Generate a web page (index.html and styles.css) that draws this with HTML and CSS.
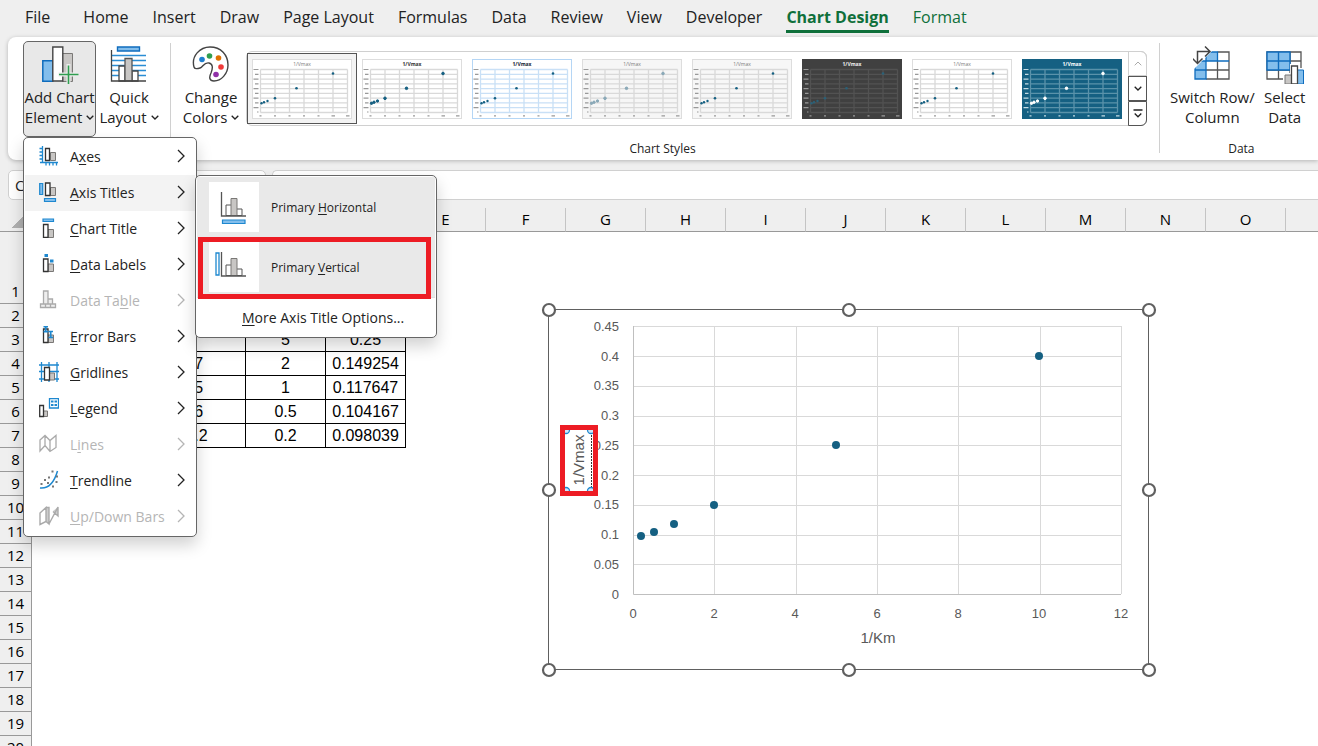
FILE: index.html
```html
<!DOCTYPE html>
<html lang="en">
<head>
<meta charset="utf-8">
<title>Workbook</title>
<link rel="stylesheet" href="styles.css">
</head>
<body>
<svg class="defs" aria-hidden="true">
  <symbol id="thumb" viewBox="0 0 100 60">
    <rect class="t-bg" x=".5" y=".5" width="99" height="59"/>
    <path class="t-grid" d="M8.5 10.5V53.5M23 10.5V53.5M37.5 10.5V53.5M52 10.5V53.5M66.5 10.5V53.5M81 10.5V53.5M95.5 10.5V53.5M8.500 10.500H95.500M8.500 15.300H95.500M8.500 20.100H95.500M8.500 24.800H95.500M8.500 29.600H95.500M8.500 34.400H95.500M8.500 39.200H95.500M8.500 43.900H95.500M8.500 48.700H95.500M8.500 53.500H95.500"/>
    <path class="t-lab" d="M1.500 10.500h5M3 15.300h3.500M1.500 20.100h5M3 24.800h3.500M1.500 29.600h5M3 34.400h3.500M1.500 39.200h5M3 43.900h3.500M1.500 48.700h5M5 53h1.500M7.500 56.800h2M22 56.800h2M36.500 56.800h2M51 56.800h2M65.500 56.800h2M79.500 56.800h3.500M94 56.800h3.500"/>
    <g class="t-dot"><circle cx="9.500" cy="44.300" r="1.200"/><circle cx="12" cy="43.200" r="1.200"/><circle cx="15.500" cy="42" r="1.200"/><circle cx="23" cy="39.300" r="1.300"/><circle cx="44.500" cy="29.300" r="1.300"/><circle cx="81" cy="14.500" r="1.300"/></g>
    <text class="t-title" x="50" y="6.500" text-anchor="middle">1/Vmax</text>
  </symbol>
  <symbol id="next" viewBox="0 0 8 14"><path d="M1 1l6 6-6 6" fill="none" stroke="currentColor" stroke-width="1.300"/></symbol>
  <symbol id="down" viewBox="0 0 8 5"><path d="M.7.7L4 4 7.300.7" fill="none" stroke="currentColor" stroke-width="1.300"/></symbol>
</svg>

<nav class="tabs">
  <a class="tab file" href="#file">File</a>
  <a class="tab" href="#home">Home</a>
  <a class="tab" href="#insert">Insert</a>
  <a class="tab" href="#draw">Draw</a>
  <a class="tab" href="#layout">Page Layout</a>
  <a class="tab" href="#formulas">Formulas</a>
  <a class="tab" href="#data">Data</a>
  <a class="tab" href="#review">Review</a>
  <a class="tab" href="#view">View</a>
  <a class="tab" href="#developer">Developer</a>
  <a class="tab active" href="#design">Chart Design</a>
  <a class="tab context" href="#format">Format</a>
</nav>

<section class="ribbon">
  <div class="group layouts">
    <div class="group-body">
      <div class="dropdown">
        <button class="big open">
          <svg width="38" height="38" viewBox="0 0 38 38">
            <path d="M21.500 7.500h10v28h-10z" fill="#c8c6c4" stroke="#7a7876"/>
            <path d="M1.800 14.700h10v20.500h-10z" fill="#83beec" stroke="#0f6cbd" stroke-width="1.500"/>
            <path d="M11.800 1h10v34h-10z" fill="#fff" stroke="#444" stroke-width="1.400"/>
            <path d="M27.500 18v20M17.500 28.500h20" stroke="#ececec" stroke-width="4"/>
            <path d="M27.500 19.500V38M18 28.500h19.500" stroke="#2f9e4f" stroke-width="1.600"/>
          </svg>
          <span>Add Chart<br>Element <svg class="caret" width="8" height="5"><use href="#down"/></svg></span>
        </button>

        <div class="menu">
          <button class="item"><svg width="20" height="20" viewBox="0 0 20 20"><path d="M3.500 0v17M.5 2.500h3M.5 6h3M.5 9.500h3M.5 13h3M2 16.500h17M7 16.500v3M10.500 16.500v3M14 16.500v3M17.500 16.500v3M1 16.500h2" stroke="#1e88cf" fill="none" stroke-width="1.300"/><path d="M11.500 6.500h5v8h-5z" fill="#c8c6c4" stroke="#7a7876"/><path d="M6.500 2.500h4v12h-4z" fill="#fff" stroke="#333" stroke-width="1.300"/></svg><span>A<u>x</u>es</span><svg class="go"><use href="#next"/></svg></button>
          <button class="item hot"><svg width="20" height="20" viewBox="0 0 20 20"><path d="M.7 1.500h3v11h-3zM5.500 16.500h11v3h-11z" fill="#83beec" stroke="#1e88cf" stroke-width="1.200"/><path d="M11.500 5.500h5v8h-5z" fill="#c8c6c4" stroke="#7a7876"/><path d="M6.500 1h4.500v12.500H6.500z" fill="#fff" stroke="#333" stroke-width="1.300"/></svg><span><u>A</u>xis Titles</span><svg class="go"><use href="#next"/></svg></button>
          <button class="item"><svg width="20" height="20" viewBox="0 0 20 20"><path d="M4 1h10.500v2.500H4z" fill="#83beec" stroke="#1e88cf" stroke-width="1.200"/><path d="M9 11.500h5.500v8H9z" fill="#c8c6c4" stroke="#7a7876"/><path d="M4.500 6.500H9v13H4.500z" fill="#fff" stroke="#333" stroke-width="1.300"/></svg><span><u>C</u>hart Title</span><svg class="go"><use href="#next"/></svg></button>
          <button class="item"><svg width="20" height="20" viewBox="0 0 20 20"><path d="M5.500 0h3.500v3H5.500zM11 5.500h3.500v3H11z" fill="#1e88cf"/><path d="M9 10h5.500v7.500H9z" fill="#c8c6c4" stroke="#7a7876"/><path d="M4.500 5H9v12.500H4.500z" fill="#fff" stroke="#333" stroke-width="1.300"/></svg><span><u>D</u>ata Labels</span><svg class="go"><use href="#next"/></svg></button>
          <button class="item" disabled><svg width="20" height="20" viewBox="0 0 20 20"><path d="M9 9h4.500v5H9zM4.500 1H9v13H4.500zM1.500 14h15v3.500h-15zM6.500 14v3.500M11.500 14v3.500" fill="#eee" stroke="#aaa" stroke-width="1.300"/></svg><span>Data Ta<u>b</u>le</span><svg class="go"><use href="#next"/></svg></button>
          <button class="item"><svg width="20" height="20" viewBox="0 0 20 20"><path d="M9 9h5.500v7.500H9z" fill="#c8c6c4" stroke="#7a7876"/><path d="M4.500 3H9v13.500H4.500z" fill="#fff" stroke="#333" stroke-width="1.300"/><path d="M4.500.7h4.500M6.700.7v5M4.500 5.700h4.500M9.500 5.500h4.500M11.700 5.500v6M9.500 11.500h4.500" stroke="#1e88cf" stroke-width="1.700"/></svg><span><u>E</u>rror Bars</span><svg class="go"><use href="#next"/></svg></button>
          <button class="item"><svg width="20" height="20" viewBox="0 0 20 20"><path d="M2.500 0v20M10 0v20M18 0v20M0 3h20M0 9.500h20M0 17h20" stroke="#1e88cf" stroke-width="1.300"/><path d="M10.500 11h5v7h-5z" fill="#c8c6c4" stroke="#7a7876"/><path d="M5.500 5.500h5v12.500h-5z" fill="#fff" stroke="#333" stroke-width="1.300"/></svg><span><u>G</u>ridlines</span><svg class="go"><use href="#next"/></svg></button>
          <button class="item"><svg width="20" height="20" viewBox="0 0 20 20"><path d="M4.500 13h4v5.500h-4z" fill="#c8c6c4" stroke="#7a7876"/><path d="M.7 7.500h3.800v11H.7z" fill="#fff" stroke="#333" stroke-width="1.300"/><path d="M10.500.5h9v9.500h-9z" fill="#fff" stroke="#1e88cf" stroke-width="1.300"/><path d="M12 3.500h2.500M15.500 3.500H18M12 7h2.500M15.500 7H18" stroke="#1e88cf" stroke-width="2"/></svg><span><u>L</u>egend</span><svg class="go"><use href="#next"/></svg></button>
          <button class="item" disabled><svg width="20" height="20" viewBox="0 0 20 20"><path d="M1 6l5-4.500 5 5 6-5v12l-6 4-5-6-5 5.500zM6 1.500v11M11 6.500v11" fill="none" stroke="#aaa" stroke-width="1.300"/></svg><span>L<u>i</u>nes</span><svg class="go"><use href="#next"/></svg></button>
          <button class="item"><svg width="20" height="20" viewBox="0 0 20 20"><path d="M1 18C10 19 15 13 18.500 1" fill="none" stroke="#1e88cf" stroke-width="1.500"/><path d="M1.500 13h2v2h-2zM5 9h2v2H5zM9 6.500h2v2H9zM12.500.5h2v2h-2zM8 12h2v2H8zM16.500 11h2v2h-2zM13 15.500h2v2h-2zM17 5.500h2v2h-2z" fill="#777"/></svg><span><u>T</u>rendline</span><svg class="go"><use href="#next"/></svg></button>
          <button class="item" disabled><svg width="20" height="20" viewBox="0 0 20 20"><path d="M7 2h3v16l-3-2.500zM14 5l5-4v8z" fill="#ccc"/><path d="M1 7l6-5.500v14L1 18.500zM7 1.500h3V18l-3-2.500M10 18l9-17v9l-5-4.500" fill="none" stroke="#aaa" stroke-width="1.400"/></svg><span><u>U</u>p/Down Bars</span><svg class="go"><use href="#next"/></svg></button>
        </div>

        <div class="submenu">
          <button class="choice"><span class="tile"><svg width="34" height="38" viewBox="0 0 34 38"><path d="M9 17h5.500v10.500H9zM19.500 21H25v6.500h-5.500z" fill="#fff" stroke="#555"/><path d="M14 10.500h6v17h-6z" fill="#c8c6c4" stroke="#7a7876"/><path d="M4.500 4v24H29" fill="none" stroke="#555" stroke-width="1.300"/><path d="M5.500 32H28v3.500H5.500z" fill="#83beec" stroke="#1e88cf" stroke-width="1.200"/></svg></span><span>Primary <u>H</u>orizontal</span></button>
          <button class="choice"><span class="tile"><svg width="34" height="38" viewBox="0 0 34 38"><path d="M9 17h5.500v10.500H9zM19.500 21H25v6.500h-5.500z" fill="#fff" stroke="#555"/><path d="M14 10.500h6v17h-6z" fill="#c8c6c4" stroke="#7a7876"/><path d="M4.500 4v24H29" fill="none" stroke="#555" stroke-width="1.300"/><path d="M-1 5h3v22h-3z" fill="#fff" stroke="#1e88cf" stroke-width="1.300"/></svg></span><span>Primary <u>V</u>ertical</span></button>
          <button class="more"><span><u>M</u>ore Axis Title Options...</span></button>
          <div class="mark"></div>
        </div>
      </div>
      <button class="big">
        <svg width="38" height="38" viewBox="0 0 38 38">
          <path d="M7.500 1h22v4h-22z" fill="#83beec" stroke="#0f6cbd" stroke-width="1.400"/>
          <path d="M2 9.500h34M2 14.500h34M2 19.500h34M2 24.500h34M2 29.500h34" stroke="#2a8dd4" stroke-width="1.500"/>
          <path d="M9 20h6v15H9zM22 25h6v10h-6z" fill="#fff" stroke="#444" stroke-width="1.300"/>
          <path d="M15 12.500h7V35h-7z" fill="#c8c6c4" stroke="#555" stroke-width="1.300"/>
          <path d="M1.500 4v31H36" fill="none" stroke="#444" stroke-width="1.300"/>
        </svg>
        <span>Quick<br>Layout <svg class="caret" width="8" height="5"><use href="#down"/></svg></span>
      </button>
    </div>
    <div class="group-name">Chart Layouts</div>
  </div>

  <div class="group styles">
    <div class="group-body">
      <button class="big colors">
        <svg width="38" height="38" viewBox="0 0 38 38">
          <path d="M2 21C-1 10 8 1 18 1c11 0 18 8 18 18 0 9-7 16-14 16-5 0-5-4-3-8 2-5 2-9-2-10-5-1-6 4-9 5-3 1-5.500 1-6-1z" fill="#fff" stroke="#444" stroke-width="1.400"/>
          <circle cx="10" cy="13.500" r="2.800" fill="#1e7fd0"/><circle cx="17.500" cy="10" r="2.800" fill="#2f9e4f"/><circle cx="26.500" cy="12" r="2.800" fill="#e07000"/><circle cx="29" cy="21" r="2.800" fill="#f03a3a"/><circle cx="24" cy="28.500" r="2.800" fill="#9030a8"/>
        </svg>
        <span>Change<br>Colors <svg class="caret" width="8" height="5"><use href="#down"/></svg></span>
      </button>
      <div class="gallery">
        <button class="style chosen" aria-label="Style 1"><svg class="s1"><use href="#thumb"/></svg></button>
        <button class="style" aria-label="Style 2"><svg class="s2"><use href="#thumb"/></svg></button>
        <button class="style" aria-label="Style 3"><svg class="s3"><use href="#thumb"/></svg></button>
        <button class="style" aria-label="Style 4"><svg class="s4"><use href="#thumb"/></svg></button>
        <button class="style" aria-label="Style 5"><svg class="s5"><use href="#thumb"/></svg></button>
        <button class="style" aria-label="Style 6"><svg class="s6"><use href="#thumb"/></svg></button>
        <button class="style" aria-label="Style 7"><svg class="s1"><use href="#thumb"/></svg></button>
        <button class="style" aria-label="Style 8"><svg class="s8"><use href="#thumb"/></svg></button>
        <div class="scroller">
          <button disabled aria-label="Row up"><svg width="8" height="5" viewBox="0 0 8 5"><path d="M.7 4.300L4 1l3.300 3.300" fill="none" stroke="#aaa"/></svg></button>
          <button aria-label="Row down"><svg width="8" height="5"><use href="#down"/></svg></button>
          <button aria-label="More styles"><svg width="10" height="9" viewBox="0 0 10 9"><path d="M.5 1h9M1.700 4.500L5 7.800l3.300-3.300" fill="none" stroke="#222" stroke-width="1.300"/></svg></button>
        </div>
      </div>
    </div>
    <div class="group-name">Chart Styles</div>
  </div>

  <div class="group data">
    <div class="group-body">
      <button class="big">
        <svg width="38" height="38" viewBox="0 0 38 38">
          <path d="M2 6h34v27H2z" fill="#fff"/>
          <path d="M13 6h23v9H13zM2 15h11v18H2z" fill="#83beec"/>
          <path d="M24.500 6H36v9H24.500z" fill="#fff"/>
          <path d="M13 6h11.500v9H13z" fill="#83beec"/>
          <path d="M24.500 6H36v27H13M24.500 15v18M13 24h23" fill="none" stroke="#555" stroke-width="1.300"/>
          <path d="M2 6v27h11V6M2 6h22.500v9M2 15h34M2 24h11" fill="none" stroke="#0f6cbd" stroke-width="1.300"/>
          <path d="M-3-3h30L-3 27z" fill="#fff"/>
          <path d="M4.500 17V5.500H17M12 .5l5 5-5 5M-.5 12.500l5 5 5-5" fill="none" stroke="#444" stroke-width="1.500"/>
        </svg>
        <span>Switch Row/<br>Column</span>
      </button>
      <button class="big select">
        <svg width="38" height="38" viewBox="0 0 38 38">
          <path d="M1 6h34v27H1z" fill="#fff" stroke="#555" stroke-width="1.300"/>
          <path d="M1 24h34M12.500 24v9M24 6v27M24 15h11" stroke="#555" stroke-width="1.300"/>
          <path d="M1 6h23v18H1zM12.500 6v18M1 15h23" fill="#83beec" stroke="#0f6cbd" stroke-width="1.400"/>
          <path d="M17 27h7v-9h9v4h7v18H17z" fill="#fff"/>
          <path d="M19 29h6.500v9H19z" fill="#c8c6c4" stroke="#777"/><path d="M31.500 24h6v14h-6z" fill="#83beec" stroke="#0f6cbd"/><path d="M25.500 20h6v18h-6z" fill="#fff" stroke="#444" stroke-width="1.300"/>
        </svg>
        <span>Select<br>Data</span>
      </button>
    </div>
    <div class="group-name">Data</div>
  </div>
</section>

<div class="formula-row">
  <input class="name-box" aria-label="Name box" value="Chart 2">
  <input class="formula" aria-label="Formula">
</div>

<main class="sheet">
  <table>
    <colgroup><col class="c-head"><col class="c-wide"><col class="c-wide"><col span="13"><col class="c-last"></colgroup>
    <thead><tr><th class="corner"></th><th>A</th><th>B</th><th>C</th><th>D</th><th>E</th><th>F</th><th>G</th><th>H</th><th>I</th><th>J</th><th>K</th><th>L</th><th>M</th><th>N</th><th>O</th><th>P</th></tr></thead>
    <tbody>
      <tr class="tall"><th>1</th><td>[S]</td><td>V</td><td>1/[S]</td><td>1/V</td></tr>
      <tr><th>2</th><td>0.1</td><td>2.5</td><td>10</td><td>0.4</td></tr>
      <tr><th>3</th><td>0.2</td><td>4</td><td>5</td><td>0.25</td></tr>
      <tr><th>4</th><td>0.5</td><td>6.7</td><td>2</td><td>0.149254</td></tr>
      <tr><th>5</th><td>1</td><td>8.5</td><td>1</td><td>0.117647</td></tr>
      <tr><th>6</th><td>2</td><td>9.6</td><td>0.5</td><td>0.104167</td></tr>
      <tr><th>7</th><td>5</td><td>10.2</td><td>0.2</td><td>0.098039</td></tr>
      <tr><th>8</th></tr><tr><th>9</th></tr><tr><th>10</th></tr><tr><th>11</th></tr><tr><th>12</th></tr><tr><th>13</th></tr><tr><th>14</th></tr><tr><th>15</th></tr><tr><th>16</th></tr><tr><th>17</th></tr><tr><th>18</th></tr><tr><th>19</th></tr><tr><th>20</th></tr>
    </tbody>
  </table>

  <svg class="chart" viewBox="541 302 616 376" width="616" height="376" role="img" aria-label="Scatter chart of 1/Vmax against 1/Km">
    <rect x="548.500" y="309.500" width="600" height="360" fill="#fff" stroke="#606060"/>
    <path d="M714.500 326v268M796.500 326v268M877.500 326v268M958.500 326v268M1040.500 326v268M1121.500 326v268M633 326.500h488M633 356.500h488M633 386.500h488M633 416.500h488M633 445.500h488M633 475.500h488M633 505.500h488M633 535.500h488M633 564.500h488" stroke="#d9d9d9"/>
    <path d="M633.500 326v268.500H1121" fill="none" stroke="#bfbfbf"/>
    <g fill="#156082"><circle cx="641" cy="536" r="4"/><circle cx="654" cy="532" r="4"/><circle cx="674" cy="524" r="4"/><circle cx="714" cy="505" r="4"/><circle cx="836" cy="445" r="4"/><circle cx="1039" cy="356" r="4"/></g>
    <g class="axis" text-anchor="end"><text x="619" y="331">0.45</text><text x="619" y="361">0.4</text><text x="619" y="390">0.35</text><text x="619" y="420">0.3</text><text x="619" y="450">0.25</text><text x="619" y="480">0.2</text><text x="619" y="509">0.15</text><text x="619" y="539">0.1</text><text x="619" y="569">0.05</text><text x="619" y="599">0</text></g>
    <g class="axis" text-anchor="middle"><text x="633" y="618">0</text><text x="714" y="618">2</text><text x="795" y="618">4</text><text x="877" y="618">6</text><text x="958" y="618">8</text><text x="1039" y="618">10</text><text x="1121" y="618">12</text></g>
    <text class="axis-title" x="878" y="643" text-anchor="middle">1/Km</text>
    <rect x="562.500" y="427.500" width="33" height="66" fill="#fff"/>
    <path d="M591.500 432v58" stroke="#333" stroke-dasharray="2 1"/>
    <g fill="#cfe6fa" stroke="#1e88cf" stroke-width="1.300"><circle cx="566" cy="430" r="3.500"/><circle cx="591" cy="430" r="3.500"/><circle cx="566" cy="491" r="3.500"/><circle cx="591" cy="491" r="3.500"/></g>
    <text class="axis-title" transform="translate(584 460) rotate(-90)" text-anchor="middle">1/Vmax</text>
    <rect x="562.500" y="427.500" width="33" height="66" fill="none" stroke="#ed1c24" stroke-width="5"/>
    <g fill="#fff" stroke="#606060" stroke-width="2.200"><circle cx="549" cy="310" r="6"/><circle cx="849" cy="310" r="6"/><circle cx="1149" cy="310" r="6"/><circle cx="549" cy="490" r="6"/><circle cx="1149" cy="490" r="6"/><circle cx="549" cy="670" r="6"/><circle cx="849" cy="670" r="6"/><circle cx="1149" cy="670" r="6"/></g>
  </svg>
</main>
</body>
</html>
```
FILE: styles.css
```css
* { box-sizing: border-box; }
body {
  margin: 0;
  height: 100vh;
  display: flex;
  flex-direction: column;
  overflow: hidden;
  background: #efefef;
  color: #222;
  font-family: "Open Sans", "Noto Sans", sans-serif;
  font-size: 15px;
}
button, input { font: inherit; color: inherit; }
button { margin: 0; padding: 0; border: 0; background: none; }
.defs { position: absolute; width: 0; height: 0; }

.tabs { display: flex; gap: 24px; height: 37px; flex: none; padding: 5px 25px 0; font-size: 16px; line-height: 24px; white-space: nowrap; }
.tab { color: #222; text-decoration: none; height: 28px; }
.tab.file { margin-right: 9px; }
.tab.active { color: #0f703b; font-weight: 700; border-bottom: 3px solid #0f703b; }
.tab.context { color: #0f703b; }

.ribbon {
  position: relative;
  z-index: 2;
  display: flex;
  margin-left: 8px;
  height: 123px;
  flex: none;
  padding: 4px 0 3px;
  background: #fff;
  border-radius: 8px 0 0 8px;
  box-shadow: 0 1px 4px rgba(0, 0, 0, .25);
}
.group { display: flex; flex-direction: column; justify-content: space-between; flex: none; position: relative; }
.group + .group::before { content: ""; position: absolute; left: 0; top: 2px; bottom: 4px; border-left: 1px solid #d0d0d0; }
.layouts { width: 162px; padding-left: 15px; z-index: 1; }
.styles { padding: 0 12px 0 8px; }
.data { padding: 0 10px; }
.group-body { display: flex; height: 96px; }
.group-name { text-align: center; font-size: 12px; line-height: 16px; }
.big {
  display: flex;
  flex-direction: column;
  align-items: center;
  gap: 3px;
  min-width: 66px;
  height: 96px;
  padding: 4px 0;
  font-size: 15px;
  line-height: 20px;
  border: 1px solid transparent;
  border-radius: 5px;
  white-space: nowrap;
}
.big.open { width: 73px; background: #e8e8e8; border-color: #666; }
.big.select { min-width: 58px; }
.colors { width: 66px; margin-right: 2px; }
.caret { vertical-align: 3px; }

.gallery { display: flex; align-self: flex-start; height: 75px; margin-top: 10px; border: 1px solid #d0d0d0; border-radius: 6px; }
.style { width: 110px; padding: 4px; border: 1px solid transparent; margin: 1px 0; }
.style svg { display: block; width: 100px; height: 60px; }
.style.chosen { border-color: #555; background: #f3f3f3; }
.scroller { display: grid; grid-template-rows: repeat(3, 1fr); width: 19px; margin: -1px -1px -1px 1px; }
.scroller button { display: flex; align-items: center; justify-content: center; border: 1px solid #555; }
.scroller button:disabled { border-color: #d0d0d0; border-radius: 0 6px 0 0; }
.scroller button:last-child { border-radius: 0 0 6px 0; }

.t-bg { fill: var(--bg, #fff); stroke: var(--edge, #ddd); }
.t-grid { fill: none; stroke: var(--grid, #d9d9d9); stroke-width: 1.3; }
.t-lab { stroke: var(--lab, #999); stroke-width: 1.2; }
.t-dot { fill: var(--dot, #156082); stroke: var(--dot, #156082); stroke-width: var(--dotw, 0); }
.t-title { fill: var(--title, #777); font-size: 5px; font-weight: var(--weight, 400); }
.s2 { --dotw: 1; --title: #333; --weight: 700; }
.s3 { --edge: #b5d6f5; --grid: #c9e0f6; --title: #123; --weight: 700; }
.s4 { --bg: #f6f6f6; --dot: #8aa9b8; --dotw: 1; }
.s5 { --bg: #f7f7f7; }
.s6 { --bg: #404040; --edge: #404040; --grid: #525252; --lab: #999; --dot: #2a6178; --title: #eee; --weight: 700; }
.s8 { --bg: #156082; --edge: #156082; --grid: #5a92aa; --lab: #c5dbe4; --dot: #fff; --dotw: 1; --title: #fff; --weight: 700; }

.dropdown { position: relative; }
.menu, .submenu { position: absolute; background: #fff; border: 1px solid #666; border-radius: 5px; box-shadow: 0 8px 16px rgba(0, 0, 0, .18); }
.menu { left: 0; top: 96px; width: 174px; padding: 1px; }
.item { display: flex; align-items: center; width: 100%; height: 36px; padding: 0 10px 2px 14px; font-size: 14px; text-align: left; white-space: nowrap; }
.item > span { flex: 1; padding-left: 11px; }
.item > svg { flex: none; }
.go { width: 8px; height: 14px; }
.item.hot { background: #f3f3f3; }
.item:disabled { color: #b5b5b5; }
u { text-underline-offset: 2px; }
.submenu { left: 172px; top: 134px; width: 242px; padding: 1px; }
.choice { display: flex; align-items: center; gap: 12px; width: 100%; height: 60px; padding-left: 12px; background: #e9e9e9; font-size: 12px; }
.tile { display: flex; align-items: center; justify-content: center; width: 50px; height: 50px; background: #fff; }
.tile svg { overflow: visible; }
.more { display: block; width: 100%; height: 39px; padding-left: 45px; border-top: 1px solid #e0e0e0; text-align: left; font-size: 14px; }
.mark { position: absolute; left: 2px; top: 61px; width: 233px; height: 62px; border: 5px solid #ed1c24; }

.formula-row { display: flex; gap: 6px; padding: 10px 0 8px 8px; flex: none; }
.name-box, .formula { height: 30px; border: 1px solid #d0d0d0; border-radius: 5px; background: #fff; padding: 0 6px; outline: 0; }
.name-box { width: 258px; }
.formula { flex: 1; min-width: 0; border-right: 0; border-radius: 5px 0 0 5px; }

.sheet { position: relative; flex: 1; min-height: 0; overflow: hidden; background: #fff; }
table { table-layout: fixed; width: 1446px; border-spacing: 0; font-family: "Liberation Sans", sans-serif; font-size: 16px; line-height: 20px; color: #000; }
col { width: 80px; }
.c-head { width: 32px; }
.c-wide { width: 107px; }
.c-last { width: 160px; }
th, td { height: 24px; padding: 0; text-align: center; font-weight: 400; }
th { background: #efefef; border: 0 solid #999; border-width: 0 1px 1px 0; font-family: "Open Sans", "Noto Sans", sans-serif; font-size: 15px; padding-bottom: 2px; }
thead th { border-right-color: #c4c4c4; }
.corner { background: linear-gradient(135deg, transparent 50%, #b0b0b0 50%) 11px 9px / 12px 11px no-repeat #efefef; border-right: 0; }
td { border: 0 solid #000; border-width: 0 1px 1px 0; }
.tall th, .tall td { height: 72px; vertical-align: bottom; }
.chart { position: absolute; left: 541px; top: 94px; }
.axis, .axis-title { font-family: "Liberation Sans", sans-serif; fill: #595959; }
.axis { font-size: 13px; }
.axis-title { font-size: 15px; }
```
